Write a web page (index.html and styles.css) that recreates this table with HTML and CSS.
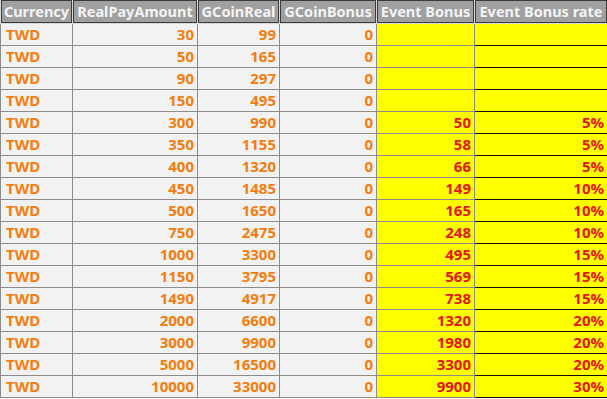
FILE: index.html
```html
<!DOCTYPE html>
<html>
<head>
<meta charset="utf-8">
<link rel="stylesheet" href="styles.css">
</head>
<body>
<table class="sheet">
  <colgroup>
    <col class="c1"><col class="c2"><col class="c3"><col class="c4"><col class="c5"><col class="c6">
  </colgroup>
  <thead>
    <tr><th>Currency</th><th>RealPayAmount</th><th>GCoinReal</th><th>GCoinBonus</th><th>Event Bonus</th><th>Event Bonus rate</th></tr>
  </thead>
  <tbody>
    <tr><td class="cur">TWD</td><td>30</td><td>99</td><td>0</td><td class="ev"></td><td class="rate"></td></tr>
    <tr><td class="cur">TWD</td><td>50</td><td>165</td><td>0</td><td class="ev"></td><td class="rate"></td></tr>
    <tr><td class="cur">TWD</td><td>90</td><td>297</td><td>0</td><td class="ev"></td><td class="rate"></td></tr>
    <tr><td class="cur">TWD</td><td>150</td><td>495</td><td>0</td><td class="ev"></td><td class="rate"></td></tr>
    <tr><td class="cur">TWD</td><td>300</td><td>990</td><td>0</td><td class="ev">50</td><td class="rate">5%</td></tr>
    <tr><td class="cur">TWD</td><td>350</td><td>1155</td><td>0</td><td class="ev">58</td><td class="rate">5%</td></tr>
    <tr><td class="cur">TWD</td><td>400</td><td>1320</td><td>0</td><td class="ev">66</td><td class="rate">5%</td></tr>
    <tr><td class="cur">TWD</td><td>450</td><td>1485</td><td>0</td><td class="ev">149</td><td class="rate">10%</td></tr>
    <tr><td class="cur">TWD</td><td>500</td><td>1650</td><td>0</td><td class="ev">165</td><td class="rate">10%</td></tr>
    <tr><td class="cur">TWD</td><td>750</td><td>2475</td><td>0</td><td class="ev">248</td><td class="rate">10%</td></tr>
    <tr><td class="cur">TWD</td><td>1000</td><td>3300</td><td>0</td><td class="ev">495</td><td class="rate">15%</td></tr>
    <tr><td class="cur">TWD</td><td>1150</td><td>3795</td><td>0</td><td class="ev">569</td><td class="rate">15%</td></tr>
    <tr><td class="cur">TWD</td><td>1490</td><td>4917</td><td>0</td><td class="ev">738</td><td class="rate">15%</td></tr>
    <tr><td class="cur">TWD</td><td>2000</td><td>6600</td><td>0</td><td class="ev">1320</td><td class="rate">20%</td></tr>
    <tr><td class="cur">TWD</td><td>3000</td><td>9900</td><td>0</td><td class="ev">1980</td><td class="rate">20%</td></tr>
    <tr><td class="cur">TWD</td><td>5000</td><td>16500</td><td>0</td><td class="ev">3300</td><td class="rate">20%</td></tr>
    <tr><td class="cur">TWD</td><td>10000</td><td>33000</td><td>0</td><td class="ev">9900</td><td class="rate">30%</td></tr>
  </tbody>
</table>
</body>
</html>
```
FILE: styles.css
```css
html, body {
  margin: 0;
  padding: 0;
  background: #ffffff;
}
.sheet {
  border-collapse: collapse;
  table-layout: fixed;
  width: 607px;
  font-family: "Noto Sans", "Open Sans", sans-serif;
  font-weight: bold;
}
.c1 { width: 72px; }
.c2 { width: 125px; }
.c3 { width: 82px; }
.c4 { width: 97px; }
.c5 { width: 98px; }
.c6 { width: 133px; }
.sheet th {
  height: 23px;
  padding: 0 2px;
  background: #a0a0a0;
  color: #f4f4f4;
  font-size: 14.5px;
  line-height: 21px;
  text-align: center;
  border: 1px solid #d8d8d8;
  border-top: 0;
  box-shadow: inset 0 0 0 1px #3c3c3c;
  white-space: nowrap;
  overflow: hidden;
}
.sheet td {
  height: 21px;
  padding: 0 3px 0 4px;
  background: #f2f2f2;
  color: #f57d0f;
  font-size: 15px;
  line-height: 21px;
  text-align: right;
  border: 1px solid #8c8c8c;
  white-space: nowrap;
}
.sheet td.cur {
  text-align: left;
  padding-left: 5px;
}
.sheet td.ev {
  background: #ffff00;
  color: #e8140c;
}
.sheet td.rate {
  background: #ffff00;
  color: #e8140c;
  border: 1px solid #111111;
}
```
